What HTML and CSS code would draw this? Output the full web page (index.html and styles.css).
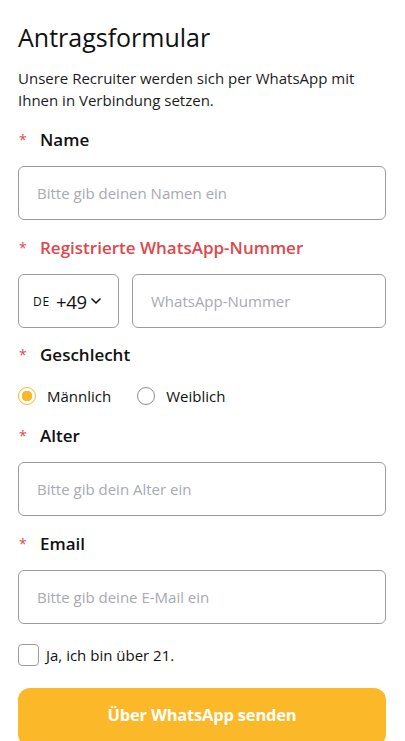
FILE: index.html
```html
<!DOCTYPE html>
<html lang="de">
<head>
    <meta charset="UTF-8">
    <meta name="viewport" content="width=device-width, initial-scale=1.0">
    <title>Antragsformular</title>
    <link rel="stylesheet" href="styles.css">
</head>
<body>

<div class="sheet">
    <h1 class="title">Antragsformular</h1>
    <p class="intro">Unsere Recruiter werden sich per WhatsApp mit Ihnen in Verbindung setzen.</p>

    <form class="form" onsubmit="return false">
        <label class="label"><span class="star">*</span>Name</label>
        <input type="text" class="field" placeholder="Bitte gib deinen Namen ein">

        <label class="label error"><span class="star">*</span>Registrierte WhatsApp-Nummer</label>
        <div class="phone">
            <button type="button" class="country">
                <span class="code">DE</span>
                <span class="prefix">+49</span>
                <svg class="chevron" width="10" height="6" viewBox="0 0 10 6"><path d="M1 1l4 4 4-4" fill="none" stroke="#111" stroke-width="1.6" stroke-linecap="round" stroke-linejoin="round"/></svg>
            </button>
            <input type="tel" class="field number" placeholder="WhatsApp-Nummer">
        </div>

        <label class="label"><span class="star">*</span>Geschlecht</label>
        <div class="radios">
            <label class="radio"><span class="dot checked"></span>Männlich</label>
            <label class="radio"><span class="dot"></span>Weiblich</label>
        </div>

        <label class="label"><span class="star">*</span>Alter</label>
        <input type="text" class="field" placeholder="Bitte gib dein Alter ein">

        <label class="label"><span class="star">*</span>Email</label>
        <input type="email" class="field" placeholder="Bitte gib deine E-Mail ein">

        <label class="check"><span class="box"></span>Ja, ich bin über 21.</label>

        <button type="submit" class="submit">Über WhatsApp senden</button>
    </form>
</div>

</body>
</html>
```

FILE: styles.css
```css
body {
    margin: 0;
    background-color: #fff;
    font-family: "Open Sans", "Noto Sans", sans-serif;
    color: #111;
}

.sheet {
    padding: 20px 19px 0 18px;
}

.title {
    margin: 0;
    font-size: 25px;
    font-weight: 400;
    line-height: 34px;
}

.intro {
    margin: 13px 0 0;
    font-size: 15px;
    line-height: 22px;
    color: #1c1c1c;
}

.form {
    display: flex;
    flex-direction: column;
    margin-top: 16px;
}

.label {
    display: flex;
    align-items: center;
    height: 24px;
    font-size: 17px;
    font-weight: 600;
    margin-bottom: 15px;
}

.label.error {
    color: #e0474c;
}

.star {
    width: 21px;
    color: #e0474c;
    font-weight: 400;
    font-size: 14px;
    padding-left: 1px;
}

.field {
    box-sizing: border-box;
    height: 54px;
    width: 100%;
    padding: 0 18px;
    border: 1px solid #9c9c9c;
    border-radius: 6px;
    font-family: inherit;
    font-size: 15px;
    color: #111;
    margin-bottom: 15px;
    outline: none;
}

.field::placeholder {
    color: #a7aab0;
}

.phone {
    display: flex;
    gap: 13px;
    margin-bottom: 14px;
}

.phone .field {
    margin-bottom: 0;
}

.country {
    box-sizing: border-box;
    flex: 0 0 101px;
    height: 54px;
    display: flex;
    align-items: center;
    padding: 0 0 0 14px;
    border: 1px solid #9c9c9c;
    border-radius: 6px;
    background-color: #fff;
    font-family: inherit;
    color: #111;
}

.code {
    font-size: 12px;
    font-weight: 500;
    letter-spacing: 0.8px;
    margin-right: 6px;
}

.prefix {
    font-size: 18.5px;
    letter-spacing: -0.3px;
    margin-right: 4px;
}

.number {
    flex: 1;
}

.radios {
    display: flex;
    gap: 26px;
    height: 24px;
    margin: 3px 0 15px;
}

.radio {
    display: flex;
    align-items: center;
    gap: 11px;
    font-size: 15px;
}

.dot {
    box-sizing: border-box;
    width: 18px;
    height: 18px;
    border: 1px solid #8e8e8e;
    border-radius: 50%;
}

.dot.checked {
    border-color: #fbb829;
    background: radial-gradient(circle, #fbb829 0 5px, #fff 5.5px);
}

.check {
    display: flex;
    align-items: center;
    gap: 7px;
    margin-top: 5px;
    height: 22px;
    font-size: 15px;
}

.box {
    box-sizing: border-box;
    width: 21px;
    height: 22px;
    border: 1px solid #9c9c9c;
    border-radius: 4px;
}

.submit {
    margin-top: 22px;
    height: 58px;
    border: none;
    border-radius: 12px;
    background-color: #fbb829;
    color: #fff;
    font-family: inherit;
    font-size: 16.5px;
    font-weight: 700;
    letter-spacing: -0.2px;
    padding-bottom: 6px;
    cursor: pointer;
}
```
